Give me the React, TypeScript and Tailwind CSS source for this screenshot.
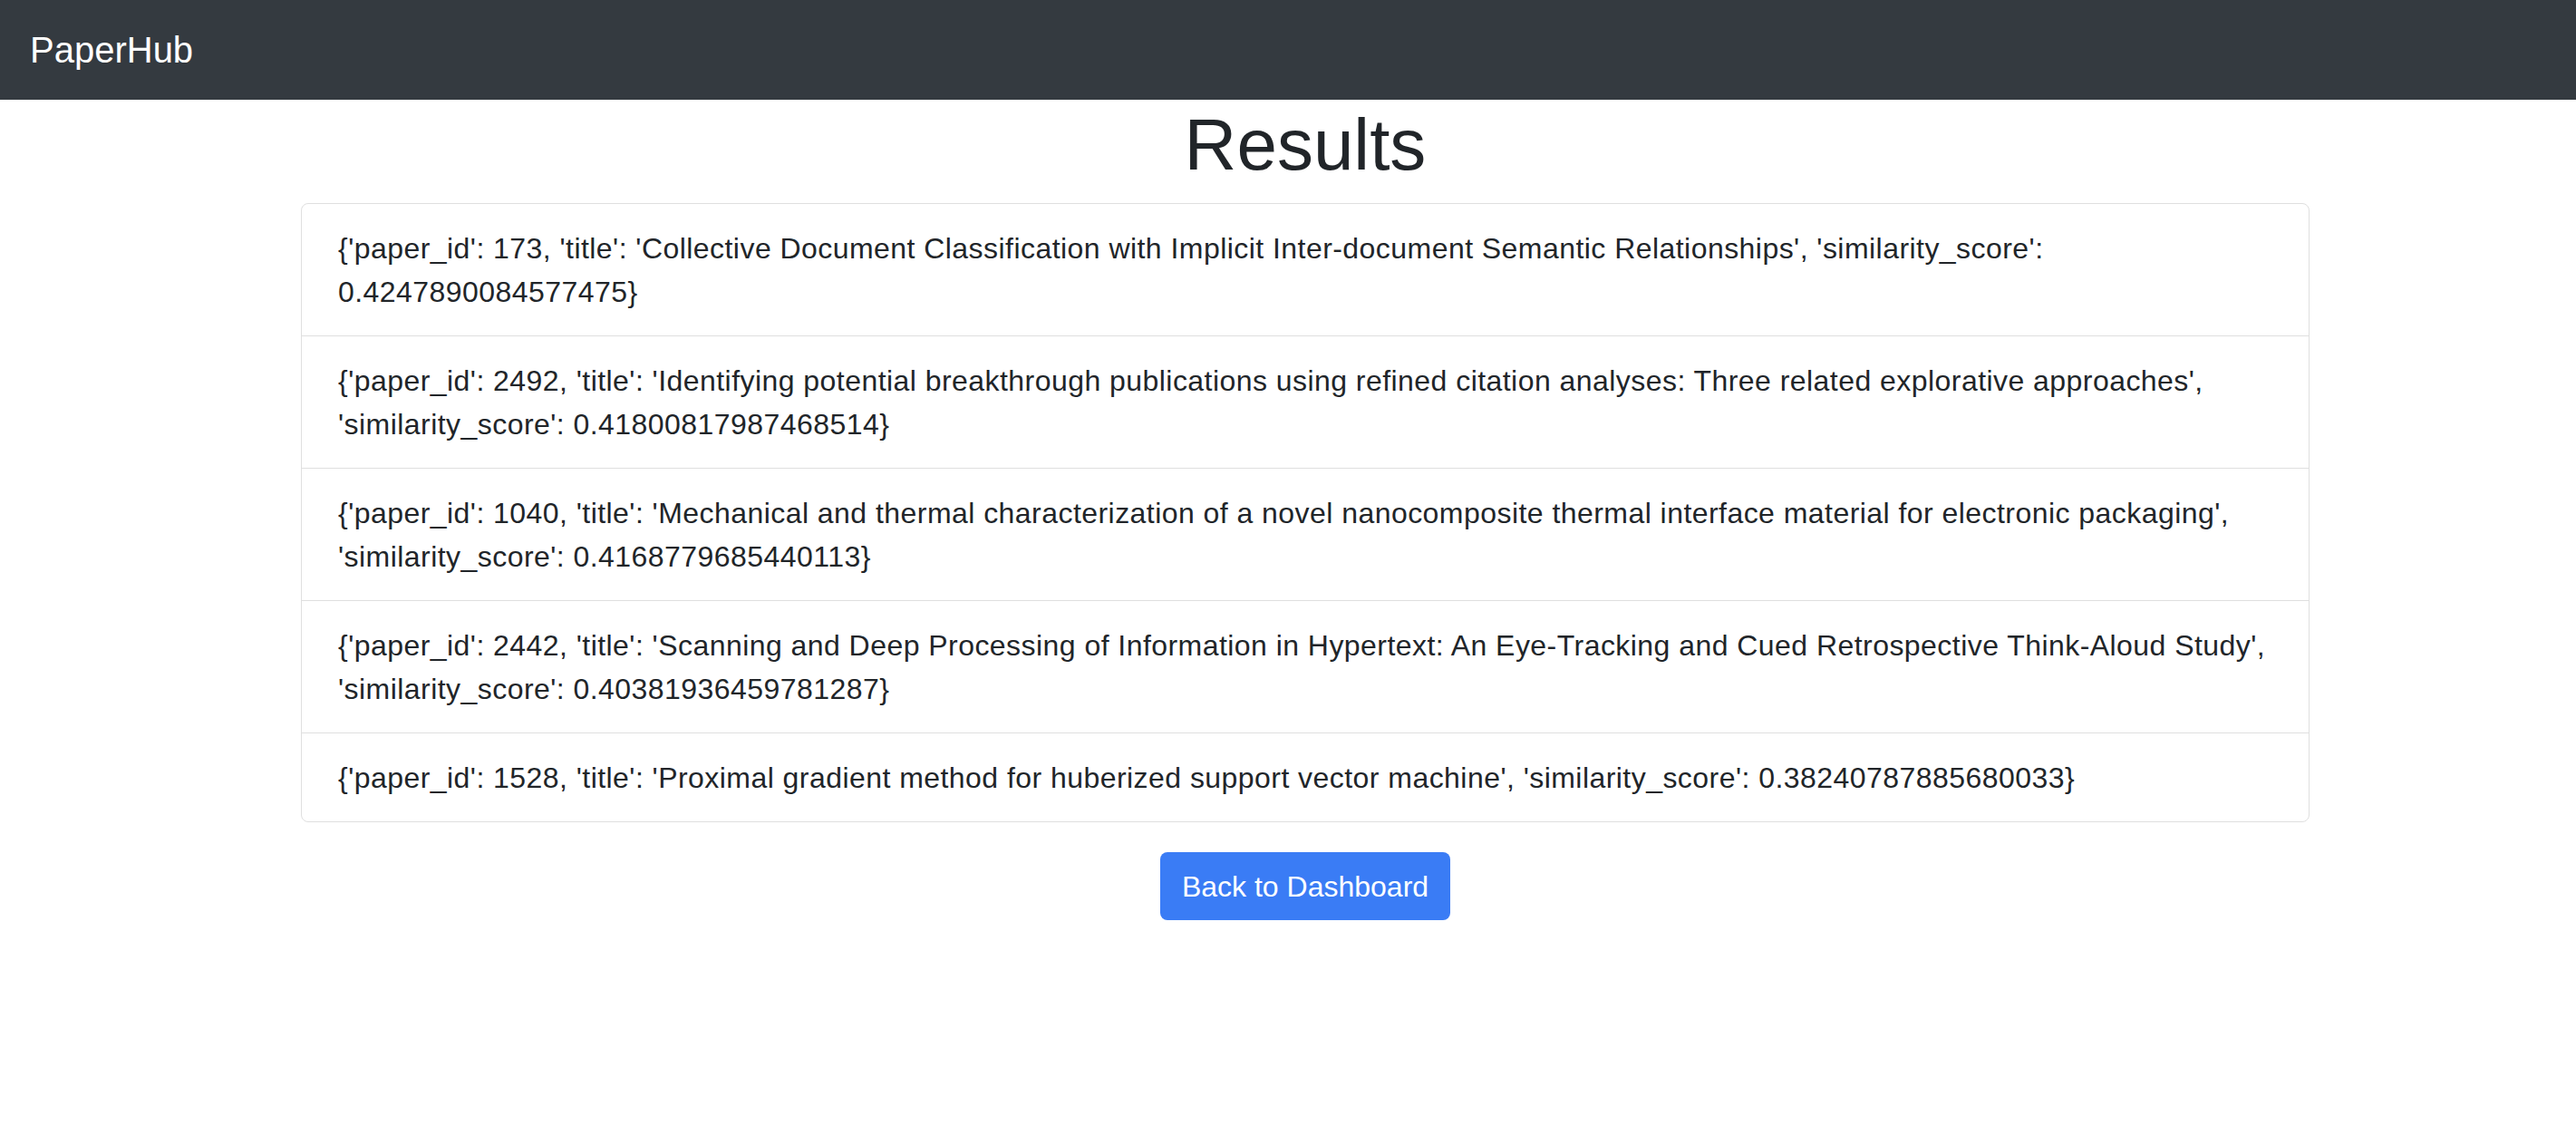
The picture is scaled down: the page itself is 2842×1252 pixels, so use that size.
const results = [
  "{'paper_id': 173, 'title': 'Collective Document Classification with Implicit Inter-document Semantic Relationships', 'similarity_score': 0.4247890084577475}",
  "{'paper_id': 2492, 'title': 'Identifying potential breakthrough publications using refined citation analyses: Three related explorative approaches', 'similarity_score': 0.41800817987468514}",
  "{'paper_id': 1040, 'title': 'Mechanical and thermal characterization of a novel nanocomposite thermal interface material for electronic packaging', 'similarity_score': 0.4168779685440113}",
  "{'paper_id': 2442, 'title': 'Scanning and Deep Processing of Information in Hypertext: An Eye-Tracking and Cued Retrospective Think-Aloud Study', 'similarity_score': 0.40381936459781287}",
  "{'paper_id': 1528, 'title': 'Proximal gradient method for huberized support vector machine', 'similarity_score': 0.38240787885680033}",
];

export default function App() {
  return (
    <div className="min-h-screen bg-white text-[#212529] font-['Liberation_Sans',Arial,sans-serif]">
      <nav className="h-[110px] bg-[#343a40] flex items-center px-[33px]">
        <span className="text-white text-[40px] leading-none">PaperHub</span>
      </nav>
      <div className="ml-[332px] w-[2216px] flex flex-col items-center">
        <h1 className="mt-[2px] text-[80px] font-medium leading-[96px] mb-[16px]">Results</h1>
        <ul className="w-full border border-[#dfdfdf] rounded-[8px]">
          {results.map((r, i) => (
            <li
              key={i}
              className={
                "px-[40px] py-[24.5px] text-[32px] leading-[48px] tracking-[0.45px] " +
                (i > 0 ? "border-t border-[#dfdfdf]" : "")
              }
            >
              {r}
            </li>
          ))}
        </ul>
        <button className="mt-[33px] h-[75px] px-[24px] rounded-[8px] bg-[#3a7cf5] text-white text-[32px] leading-[48px]">
          Back to Dashboard
        </button>
      </div>
    </div>
  );
}
